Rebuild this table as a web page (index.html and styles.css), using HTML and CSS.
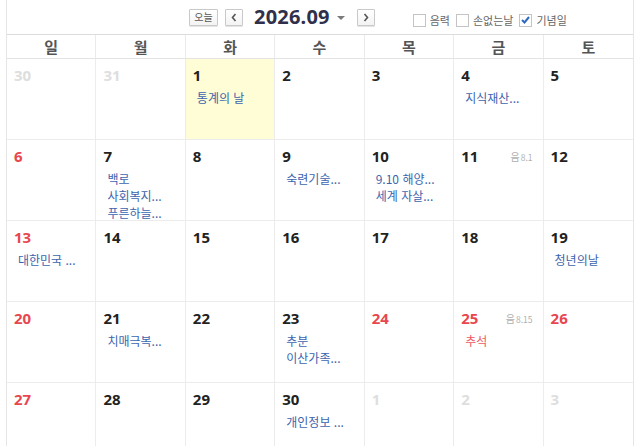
FILE: index.html
```html
<!DOCTYPE html>
<html lang="ko">
<head>
<meta charset="utf-8">
<link rel="stylesheet" href="styles.css">
</head>
<body>
<div class="cal">
  <div class="toolbar">
    <div class="nav">
      <button class="btn today">오늘</button>
      <button class="btn arrow"><svg width="8" height="9" viewBox="0 0 8 9"><path d="M5.5 1 L2.5 4.5 L5.5 8" fill="none" stroke="#555" stroke-width="1.6"/></svg></button>
      <span class="title">2026.09</span>
      <span class="caret"></span>
      <button class="btn arrow next"><svg width="8" height="9" viewBox="0 0 8 9"><path d="M2.5 1 L5.5 4.5 L2.5 8" fill="none" stroke="#555" stroke-width="1.6"/></svg></button>
    </div>
    <div class="opts">
      <label class="opt"><span class="box"></span>음력</label>
      <label class="opt"><span class="box"></span>손없는날</label>
      <label class="opt"><span class="box checked"><svg width="11" height="10" viewBox="0 0 11 10"><path d="M2 5 L4.5 7.5 L9 2" fill="none" stroke="#2f6ac0" stroke-width="2"/></svg></span>기념일</label>
    </div>
  </div>
  <div class="grid">
    <div class="dh">일</div><div class="dh">월</div><div class="dh">화</div><div class="dh">수</div><div class="dh">목</div><div class="dh">금</div><div class="dh">토</div>

    <div class="cell"><div class="top"><span class="num other">30</span></div></div>
    <div class="cell"><div class="top"><span class="num other">31</span></div></div>
    <div class="cell today-cell"><div class="top"><span class="num">1</span></div><div class="ev">통계의 날</div></div>
    <div class="cell"><div class="top"><span class="num">2</span></div></div>
    <div class="cell"><div class="top"><span class="num">3</span></div></div>
    <div class="cell"><div class="top"><span class="num">4</span></div><div class="ev">지식재산...</div></div>
    <div class="cell"><div class="top"><span class="num">5</span></div></div>

    <div class="cell"><div class="top"><span class="num red">6</span></div></div>
    <div class="cell"><div class="top"><span class="num">7</span></div><div class="ev">백로</div><div class="ev">사회복지...</div><div class="ev">푸른하늘...</div></div>
    <div class="cell"><div class="top"><span class="num">8</span></div></div>
    <div class="cell"><div class="top"><span class="num">9</span></div><div class="ev">숙련기술...</div></div>
    <div class="cell"><div class="top"><span class="num">10</span></div><div class="ev">9.10 해양...</div><div class="ev">세계 자살...</div></div>
    <div class="cell"><div class="top"><span class="num">11</span><span class="lunar">음<small>8.1</small></span></div></div>
    <div class="cell"><div class="top"><span class="num">12</span></div></div>

    <div class="cell"><div class="top"><span class="num red">13</span></div><div class="ev">대한민국 ...</div></div>
    <div class="cell"><div class="top"><span class="num">14</span></div></div>
    <div class="cell"><div class="top"><span class="num">15</span></div></div>
    <div class="cell"><div class="top"><span class="num">16</span></div></div>
    <div class="cell"><div class="top"><span class="num">17</span></div></div>
    <div class="cell"><div class="top"><span class="num">18</span></div></div>
    <div class="cell"><div class="top"><span class="num">19</span></div><div class="ev">청년의날</div></div>

    <div class="cell"><div class="top"><span class="num red">20</span></div></div>
    <div class="cell"><div class="top"><span class="num">21</span></div><div class="ev">치매극복...</div></div>
    <div class="cell"><div class="top"><span class="num">22</span></div></div>
    <div class="cell"><div class="top"><span class="num">23</span></div><div class="ev">추분</div><div class="ev">이산가족...</div></div>
    <div class="cell"><div class="top"><span class="num red">24</span></div></div>
    <div class="cell"><div class="top"><span class="num red">25</span><span class="lunar">음<small>8.15</small></span></div><div class="ev hol">추석</div></div>
    <div class="cell"><div class="top"><span class="num red">26</span></div></div>

    <div class="cell"><div class="top"><span class="num red">27</span></div></div>
    <div class="cell"><div class="top"><span class="num">28</span></div></div>
    <div class="cell"><div class="top"><span class="num">29</span></div></div>
    <div class="cell"><div class="top"><span class="num">30</span></div><div class="ev">개인정보 ...</div></div>
    <div class="cell"><div class="top"><span class="num other">1</span></div></div>
    <div class="cell"><div class="top"><span class="num other">2</span></div></div>
    <div class="cell"><div class="top"><span class="num other">3</span></div></div>
  </div>
</div>
</body>
</html>
```
FILE: styles.css
```css
html, body {
  margin: 0;
  padding: 0;
  background: #fff;
}
body {
  font-family: "Noto Sans CJK KR", "Noto Sans", sans-serif;
  color: #222;
}
.cal {
  width: 628px;
  margin: 0 6px;
  box-sizing: border-box;
  border-left: 1px solid #e6e6e6;
  border-right: 1px solid #e6e6e6;
}
.toolbar {
  height: 34px;
  border-bottom: 1px solid #dcdcdc;
  display: flex;
  align-items: flex-start;
}
.nav {
  display: flex;
  align-items: center;
  margin-left: 182px;
  margin-top: 6px;
  height: 22px;
}
.btn {
  box-sizing: border-box;
  height: 17px;
  border: 1px solid #c9c9c9;
  border-radius: 1px;
  background: linear-gradient(#fff, #f3f3f3);
  box-shadow: 0 1px 0 #e4e4e4;
  padding: 0;
  display: flex;
  align-items: center;
  justify-content: center;
  font-family: "Noto Sans CJK KR", sans-serif;
  cursor: pointer;
}
.today {
  width: 29px;
  font-size: 10px;
  color: #555;
  line-height: 1;
}
.arrow {
  width: 18px;
  margin-left: 7px;
}
.title {
  font-family: "Noto Sans", "Noto Sans CJK KR", sans-serif;
  font-weight: 700;
  font-size: 20px;
  color: #30304a;
  margin-left: 11px;
  line-height: 22px;
  letter-spacing: 0.2px;
}
.caret {
  width: 0;
  height: 0;
  border-left: 4px solid transparent;
  border-right: 4px solid transparent;
  border-top: 4px solid #7a7a7a;
  margin-left: 7px;
  margin-top: 1px;
}
.arrow.next {
  margin-left: 12px;
}
.opts {
  display: flex;
  align-items: center;
  margin-left: 38px;
  margin-top: 12px;
  gap: 5px;
}
.opt {
  display: flex;
  align-items: center;
  font-size: 11px;
  color: #666;
  margin-right: 1px;
}
.box {
  box-sizing: border-box;
  width: 13px;
  height: 13px;
  border: 1px solid #c4c4c4;
  background: #fff;
  margin-right: 4px;
  display: flex;
  align-items: center;
  justify-content: center;
}
.grid {
  display: grid;
  grid-template-columns: repeat(7, 1fr);
  grid-template-rows: 24px repeat(5, 81px);
}
.dh {
  border-right: 1px solid #eaeaea;
  border-bottom: 1px solid #e3e3e3;
  text-align: center;
  font-weight: 700;
  font-size: 15px;
  line-height: 23px;
  color: #555;
}
.dh:nth-child(7n) { border-right: none; }
.cell {
  border-right: 1px solid #ececec;
  border-bottom: 1px solid #ececec;
  padding: 6px 0 0 7px;
  box-sizing: border-box;
  overflow: hidden;
}
.grid > .cell:nth-child(7n) { border-right: none; }
.today-cell {
  background: #fffdd6;
}
.top {
  display: flex;
  align-items: center;
  justify-content: space-between;
  height: 20px;
  margin-bottom: 4px;
}
.num {
  font-family: "Noto Sans", "Noto Sans CJK KR", sans-serif;
  font-weight: 700;
  font-size: 15px;
  color: #222;
}
.num.other { color: #dedede; }
.num.red { color: #e8474f; }
.lunar {
  font-size: 10px;
  color: #b0b0b0;
  margin-right: 10px;
}
.lunar small {
  font-size: 8.5px;
  margin-left: 1px;
}
.ev {
  font-size: 12px;
  line-height: 17px;
  color: #3c64ad;
  padding-left: 4px;
  white-space: nowrap;
}
.ev.hol { color: #ee5a66; }
```
